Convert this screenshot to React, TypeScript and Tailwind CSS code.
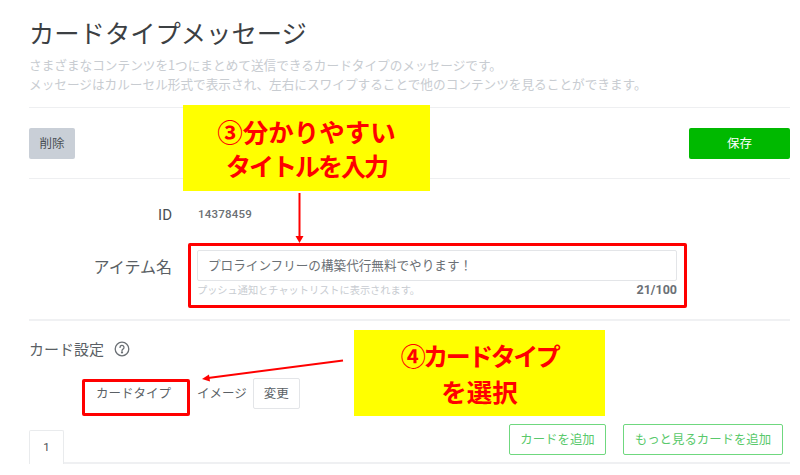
const jp = '"Noto Sans CJK JP", "Noto Sans", sans-serif';

function Callout({ className, lines }: { className: string; lines: [string, string][] }) {
  return (
    <div className={`absolute bg-[#ffff00] flex flex-col items-center justify-center font-bold text-[#ff0000] leading-[35px] ${className}`}>
      {lines.map(([text, style]) => (
        <div key={text} className={style}>{text}</div>
      ))}
    </div>
  );
}

export default function App() {
  return (
    <div className="relative w-[800px] h-[475px] overflow-hidden bg-white pl-[29px] pr-[10px]" style={{ fontFamily: jp }}>
      <h1 className="pt-[14px] text-[25.300px] leading-[36px] text-[#3c4043] font-normal">カードタイプメッセージ</h1>
      <div className="mt-[5px] text-[12.650px] leading-[19px] text-[#c8ccd1]">
        <p>さまざまなコンテンツを1つにまとめて送信できるカードタイプのメッセージです。</p>
        <p>メッセージはカルーセル形式で表示され、左右にスワイプすることで他のコンテンツを見ることができます。</p>
      </div>

      <div className="mt-[14px] h-[72px] border-y border-[#eeeff1] flex items-center justify-between">
        <button className="w-[46px] h-[31px] rounded-[2px] bg-[#c9cfd7] text-[12.500px] text-[#4a4f55]">削除</button>
        <button className="w-[101px] h-[31px] rounded-[2px] bg-[#00b900] text-[12.500px] text-white">保存</button>
      </div>

      <div className="flex items-center mt-[26px] h-[20px]">
        <div className="w-[143px] text-right text-[15px] text-[#4a4f55]" style={{ fontFamily: '"Roboto", sans-serif' }}>ID</div>
        <div className="ml-[26px] text-[11.500px] font-medium tracking-[0.2px] text-[#6b7075]" style={{ fontFamily: '"Roboto", sans-serif' }}>14378459</div>
      </div>

      <div className="flex mt-[25px]">
        <div className="w-[143px] h-[31px] flex items-center justify-end text-[16px] text-[#5a5f65]">アイテム名</div>
        <div className="ml-[25px] w-[480px]">
          <div className="h-[31px] border border-[#e3e5e8] rounded-[2px] pl-[10px] flex items-center text-[12.600px] text-[#6b7075]">プロラインフリーの構築代行無料でやります！</div>
          <div className="mt-[1px] flex justify-between items-center h-[16px]">
            <span className="text-[10.200px] text-[#c8ccd1]">プッシュ通知とチャットリストに表示されます。</span>
            <span className="text-[12.500px] font-bold text-[#6b7075]" style={{ fontFamily: '"Roboto", sans-serif' }}>21/100</span>
          </div>
        </div>
      </div>

      <div className="mt-[21px] border-t-2 border-[#f0f1f3] pt-[8px] flex items-center gap-[10px] h-[50px]">
        <span className="text-[15px] text-[#5a5f65]">カード設定</span>
        <svg width="16" height="16" viewBox="0 0 16 16" fill="none" stroke="#6b7075" strokeWidth="1.3">
          <circle cx="8" cy="8" r="6.800" />
          <path d="M6 6.400a2 2 0 1 1 3 1.700c-.7.400-1 .8-1 1.500" strokeLinecap="round" />
          <circle cx="8" cy="11.400" r=".5" fill="#6b7075" />
        </svg>
      </div>

      <div className="flex items-center mt-[9px] h-[31px]">
        <div className="ml-[67px] w-[91px] text-[12.500px] text-[#5a5f65]">カードタイプ</div>
        <div className="ml-[10px] text-[12.500px] text-[#5a5f65]">イメージ</div>
        <button className="ml-[6px] w-[47px] h-[31px] border border-[#e3e5e8] rounded-[2px] text-[12.500px] text-[#5a5f65]">変更</button>
      </div>

      <div className="flex items-end justify-between h-[39px] border-b-2 border-[#eff0f2] mt-[16px]">
        <div className="w-[35px] h-[34px] border border-b-0 border-[#e9ebed] rounded-t-[2px] bg-white flex items-center justify-center text-[11.500px] text-[#4a4f55] -mb-[2px]" style={{ fontFamily: '"Roboto", sans-serif' }}>1</div>
        <div className="flex gap-[17px] mr-[7px] mb-[7px]">
          <button className="w-[97px] h-[31px] border border-[#6fd87f] rounded-[2px] text-[12.400px] text-[#59c96b]">カードを追加</button>
          <button className="w-[160px] h-[31px] border border-[#6fd87f] rounded-[2px] text-[12.400px] text-[#59c96b]">もっと見るカードを追加</button>
        </div>
      </div>

      {/* annotations over the page */}
      <Callout
        className="left-[183px] top-[105px] w-[247px] h-[86px]"
        lines={[
          ["③分かりやすい", "text-[25.500px]"],
          ["タイトルを入力", "text-[25px] tracking-[-2px]"],
        ]}
      />
      <Callout
        className="left-[354px] top-[330px] w-[251px] h-[86px]"
        lines={[
          ["④カードタイプ", "text-[25px] tracking-[-2.500px]"],
          ["を選択", "text-[25.500px]"],
        ]}
      />
      <div className="absolute left-[188px] top-[243px] w-[499px] h-[65px] border-[3px] border-[#ff0000] rounded-[2px]" />
      <div className="absolute left-[82px] top-[379px] w-[108px] h-[37px] border-[3px] border-[#ff0000] rounded-[2px]" />
      <svg className="absolute left-0 top-0 pointer-events-none" width="800" height="475">
        <path d="M299.500 193V237" stroke="#ff0000" strokeWidth="2" />
        <path d="M295.500 236H303.500L299.500 243Z" fill="#ff0000" />
        <path d="M343 360.500L208 378" stroke="#ff0000" strokeWidth="2" />
        <path d="M202 379L209 374.500L210 381.500Z" fill="#ff0000" />
      </svg>
    </div>
  );
}
